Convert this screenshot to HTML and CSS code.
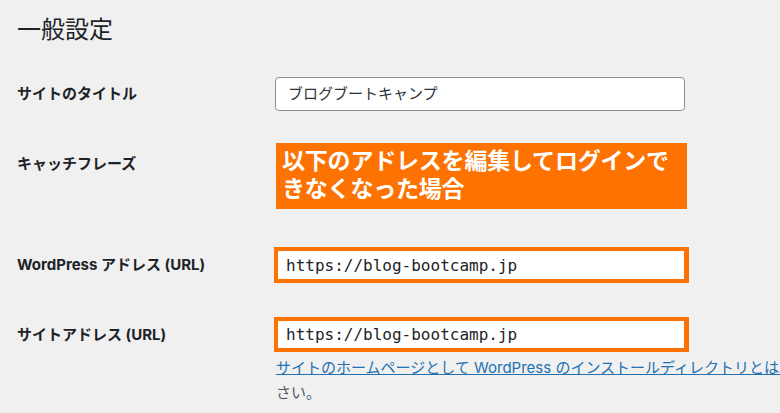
FILE: index.html
```html
<!DOCTYPE html>
<html lang="ja">
<head>
<meta charset="utf-8">
<title>一般設定</title>
<link rel="stylesheet" href="styles.css">
</head>
<body>
<div class="wrap">
  <h1 class="page-title">一般設定</h1>
  <div class="form">
    <div class="row row-title">
      <div class="label">サイトのタイトル</div>
      <div class="field">
        <div class="input">ブログブートキャンプ</div>
      </div>
    </div>
    <div class="row row-tagline">
      <div class="label label-tagline">キャッチフレーズ</div>
      <div class="field">
        <div class="callout">以下のアドレスを編集してログインできなくなった場合</div>
      </div>
    </div>
    <div class="row row-wpurl">
      <div class="label label-url">WordPress アドレス (URL)</div>
      <div class="field">
        <div class="hl-input"><span class="code">https://blog-bootcamp.jp</span></div>
      </div>
    </div>
    <div class="row row-siteurl">
      <div class="label label-url2">サイトアドレス (URL)</div>
      <div class="field">
        <div class="hl-input"><span class="code">https://blog-bootcamp.jp</span></div>
        <p class="description"><a href="#">サイトのホームページとして WordPress のインストールディレクトリとは異なる場所を使う</a>場合は、ここにアドレスを入力してください。</p>
      </div>
    </div>
  </div>
</div>
</body>
</html>
```

FILE: styles.css
```css
html, body {
  margin: 0;
  padding: 0;
  background: #f0f0f1;
  overflow: hidden;
}

body {
  font-family: "Inter", "Noto Sans CJK JP", sans-serif;
  color: #1d2327;
  width: 780px;
  height: 413px;
}

.wrap {
  padding-left: 17px;
  overflow: hidden;
  height: 413px;
}

.page-title {
  margin: 0;
  padding-top: 14px;
  font-size: 24px;
  line-height: 32px;
  font-weight: 400;
  color: #1d2327;
}

.row {
  display: grid;
  grid-template-columns: 258px auto;
  align-items: start;
}

.label {
  font-size: 15px;
  font-weight: 700;
  line-height: 34px;
  white-space: nowrap;
}

.row-title {
  margin-top: 31px;
}

.input {
  box-sizing: border-box;
  width: 410px;
  height: 34px;
  background: #fff;
  border: 1px solid #8c8f94;
  border-radius: 4px;
  padding-left: 12px;
  font-size: 15px;
  line-height: 32px;
  color: #2c3338;
}

.row-tagline {
  margin-top: 32px;
}

.label-tagline {
  margin-top: 4px;
}

.row-tagline .field {
  padding-left: 1px;
}

.callout {
  box-sizing: border-box;
  width: 411px;
  height: 66px;
  background: #fd7200;
  color: #fff;
  font-weight: 700;
  font-size: 23px;
  line-height: 28px;
  padding: 4px 0 0 6px;
  letter-spacing: -0.2px;
}

.row-wpurl {
  margin-top: 38px;
}

.label-url {
  line-height: 36px;
}

.row-wpurl .field,
.row-siteurl .field {
  margin-left: -1px;
}

.hl-input {
  box-sizing: border-box;
  width: 415px;
  height: 36px;
  background: #fff;
  border: 4px solid #fd7200;
  border-right-width: 5px;
  padding-left: 8px;
  line-height: 28px;
}

.code {
  font-family: "DejaVu Sans Mono", "Liberation Mono", monospace;
  font-size: 16px;
  color: #1d2327;
}

.row-siteurl {
  margin-top: 34px;
}

.label-url2 {
  line-height: 35px;
}

.row-siteurl .hl-input {
  height: 35px;
  line-height: 27px;
}

.description {
  margin: 3px 0 0 2px;
  width: 902px;
  font-size: 15px;
  line-height: 25px;
  color: #50575e;
}

.description a {
  color: #2271b1;
  text-decoration: underline;
}
```
